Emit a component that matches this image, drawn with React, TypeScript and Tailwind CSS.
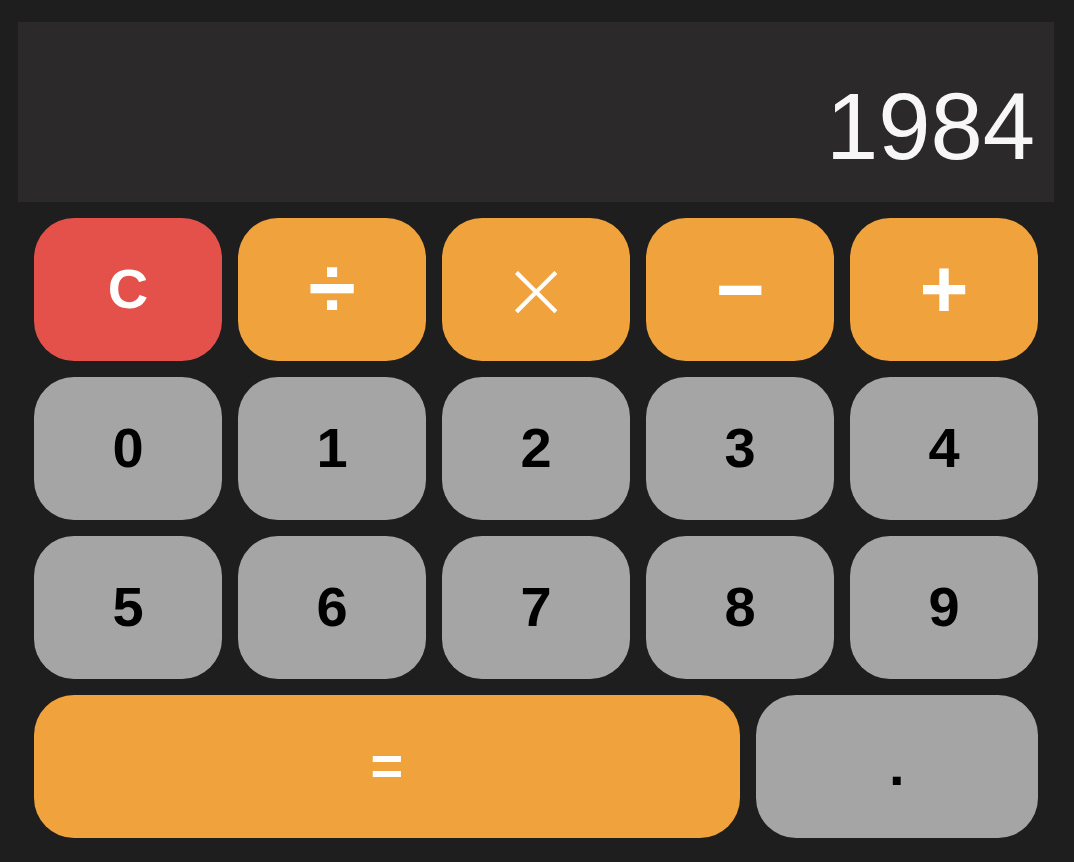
import React from "react";

const digitBtn =
  "h-full rounded-[40px] bg-[#a5a5a5] flex items-center justify-center text-[56px] font-bold text-black leading-none";
const opBtn =
  "h-full rounded-[40px] bg-[#f0a23d] flex items-center justify-center text-white leading-none";

export default function App() {
  const rows = [
    ["0", "1", "2", "3", "4"],
    ["5", "6", "7", "8", "9"],
  ];

  return (
    <div
      className="min-h-screen bg-[#1e1e1e] pl-[18px] pr-[20px] pt-[22px]"
      style={{ fontFamily: '"Liberation Sans", Arial, sans-serif' }}
    >
      <div className="h-[180px] bg-[#2b292a] flex items-end justify-end pr-[19px] pb-[28px]">
        <span className="text-[94px] leading-none text-[#f7f7f7]">1984</span>
      </div>

      <div className="flex flex-col gap-[16.5px] px-4 pt-4">
        <div className="grid grid-cols-5 gap-4 h-[142.5px]">
          <button className="h-full rounded-[40px] bg-[#e3514a] flex items-center justify-center text-[56px] font-bold text-white leading-none">
            C
          </button>
          <button className={opBtn}>
            <span className="text-[86px] font-bold -mt-1">÷</span>
          </button>
          <button className={opBtn}>
            <span className="text-[98px] font-extralight font-['Inter',sans-serif] -mt-2">×</span>
          </button>
          <button className={opBtn}>
            <span className="text-[84px] font-bold">−</span>
          </button>
          <button className={opBtn}>
            <span className="text-[84px] font-bold">+</span>
          </button>
        </div>

        {rows.map((row, i) => (
          <div key={i} className="grid grid-cols-5 gap-4 h-[142.5px]">
            {row.map((d) => (
              <button key={d} className={digitBtn}>
                {d}
              </button>
            ))}
          </div>
        ))}

        <div className="grid grid-cols-[5fr_2fr] gap-4 h-[142.5px]">
          <button className={opBtn + " text-[56px] font-bold"}>=</button>
          <button className={digitBtn}>.</button>
        </div>
      </div>
    </div>
  );
}
